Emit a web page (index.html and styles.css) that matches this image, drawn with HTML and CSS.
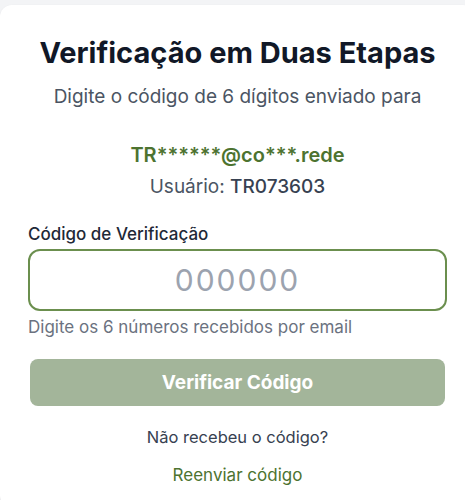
FILE: index.html
```html
<!DOCTYPE html>
<html>
<head>
    <title>Verificação em Duas Etapas</title>
    <meta name="viewport" content="width=device-width, initial-scale=1">
    <link rel="stylesheet" href="styles.css">
</head>
<body>
    <div class="card">
        <h1 class="title">Verificação em Duas Etapas</h1>
        <p class="subtitle">Digite o código de 6 dígitos enviado para</p>
        <p class="email">TR******@co***.rede</p>
        <p class="user">Usuário: <strong>TR073603</strong></p>

        <form class="verify-form" onsubmit="return false">
            <label for="code" class="label">Código de Verificação</label>
            <input type="text" id="code" class="code-input" placeholder="000000" maxlength="6">
            <p class="hint">Digite os 6 números recebidos por email</p>
            <button type="submit" class="verify-btn">Verificar Código</button>
        </form>

        <p class="resend-q">Não recebeu o código?</p>
        <a href="#" class="resend-link">Reenviar código</a>
    </div>
</body>
</html>
```

FILE: styles.css
```css
body { margin: 0; font-family: Inter, "Noto Sans", sans-serif; background: #f3f4f6; }
.card {
    margin-top: 5px;
    width: 475px;
    box-sizing: border-box;
    padding: 33px 28px 20px 28px;
    background: #ffffff;
    border-radius: 12px;
    box-shadow: 0 1px 3px rgba(0, 0, 0, 0.06);
    text-align: center;
}
.title { margin: 0; font-size: 29px; line-height: 30px; font-weight: 700; color: #111827; }
.subtitle { margin: 15px 0 0 0; font-size: 19px; line-height: 28px; color: #4b5563; }
.email { margin: 30px 0 0 0; font-size: 20px; line-height: 28px; font-weight: 600; color: #4d7330; }
.user { margin: 4px 0 0 0; font-size: 19px; line-height: 28px; color: #4b5563; }
.user strong { font-weight: 500; color: #374151; }

.verify-form { display: flex; flex-direction: column; margin-top: 21px; text-align: left; }
.label { font-size: 17px; line-height: 24px; font-weight: 500; color: #1f2937; margin-bottom: 3px; }
.code-input {
    width: 100%;
    box-sizing: border-box;
    height: 62px;
    border: 2px solid #6b8f4e;
    border-radius: 12px;
    font-family: Inter, "Noto Sans", sans-serif;
    font-size: 30px;
    letter-spacing: 2px;
    text-align: center;
    color: #111827;
    outline: none;
}
.code-input::placeholder { color: #9ca3af; }
.hint { margin: 6px 0 0 0; font-size: 17px; line-height: 20px; color: #6b7280; }
.verify-btn {
    margin: 22px 2px 0 2px;
    height: 47px;
    border: none;
    border-radius: 8px;
    background: #a3b59a;
    color: #ffffff;
    font-family: Inter, "Noto Sans", sans-serif;
    font-size: 19px;
    font-weight: 700;
    cursor: pointer;
}
.resend-q { margin: 19px 0 0 0; font-size: 16.5px; line-height: 24px; color: #374151; }
.resend-link { display: inline-block; margin-top: 14px; font-size: 17px; line-height: 24px; color: #4d7330; text-decoration: none; }
```
